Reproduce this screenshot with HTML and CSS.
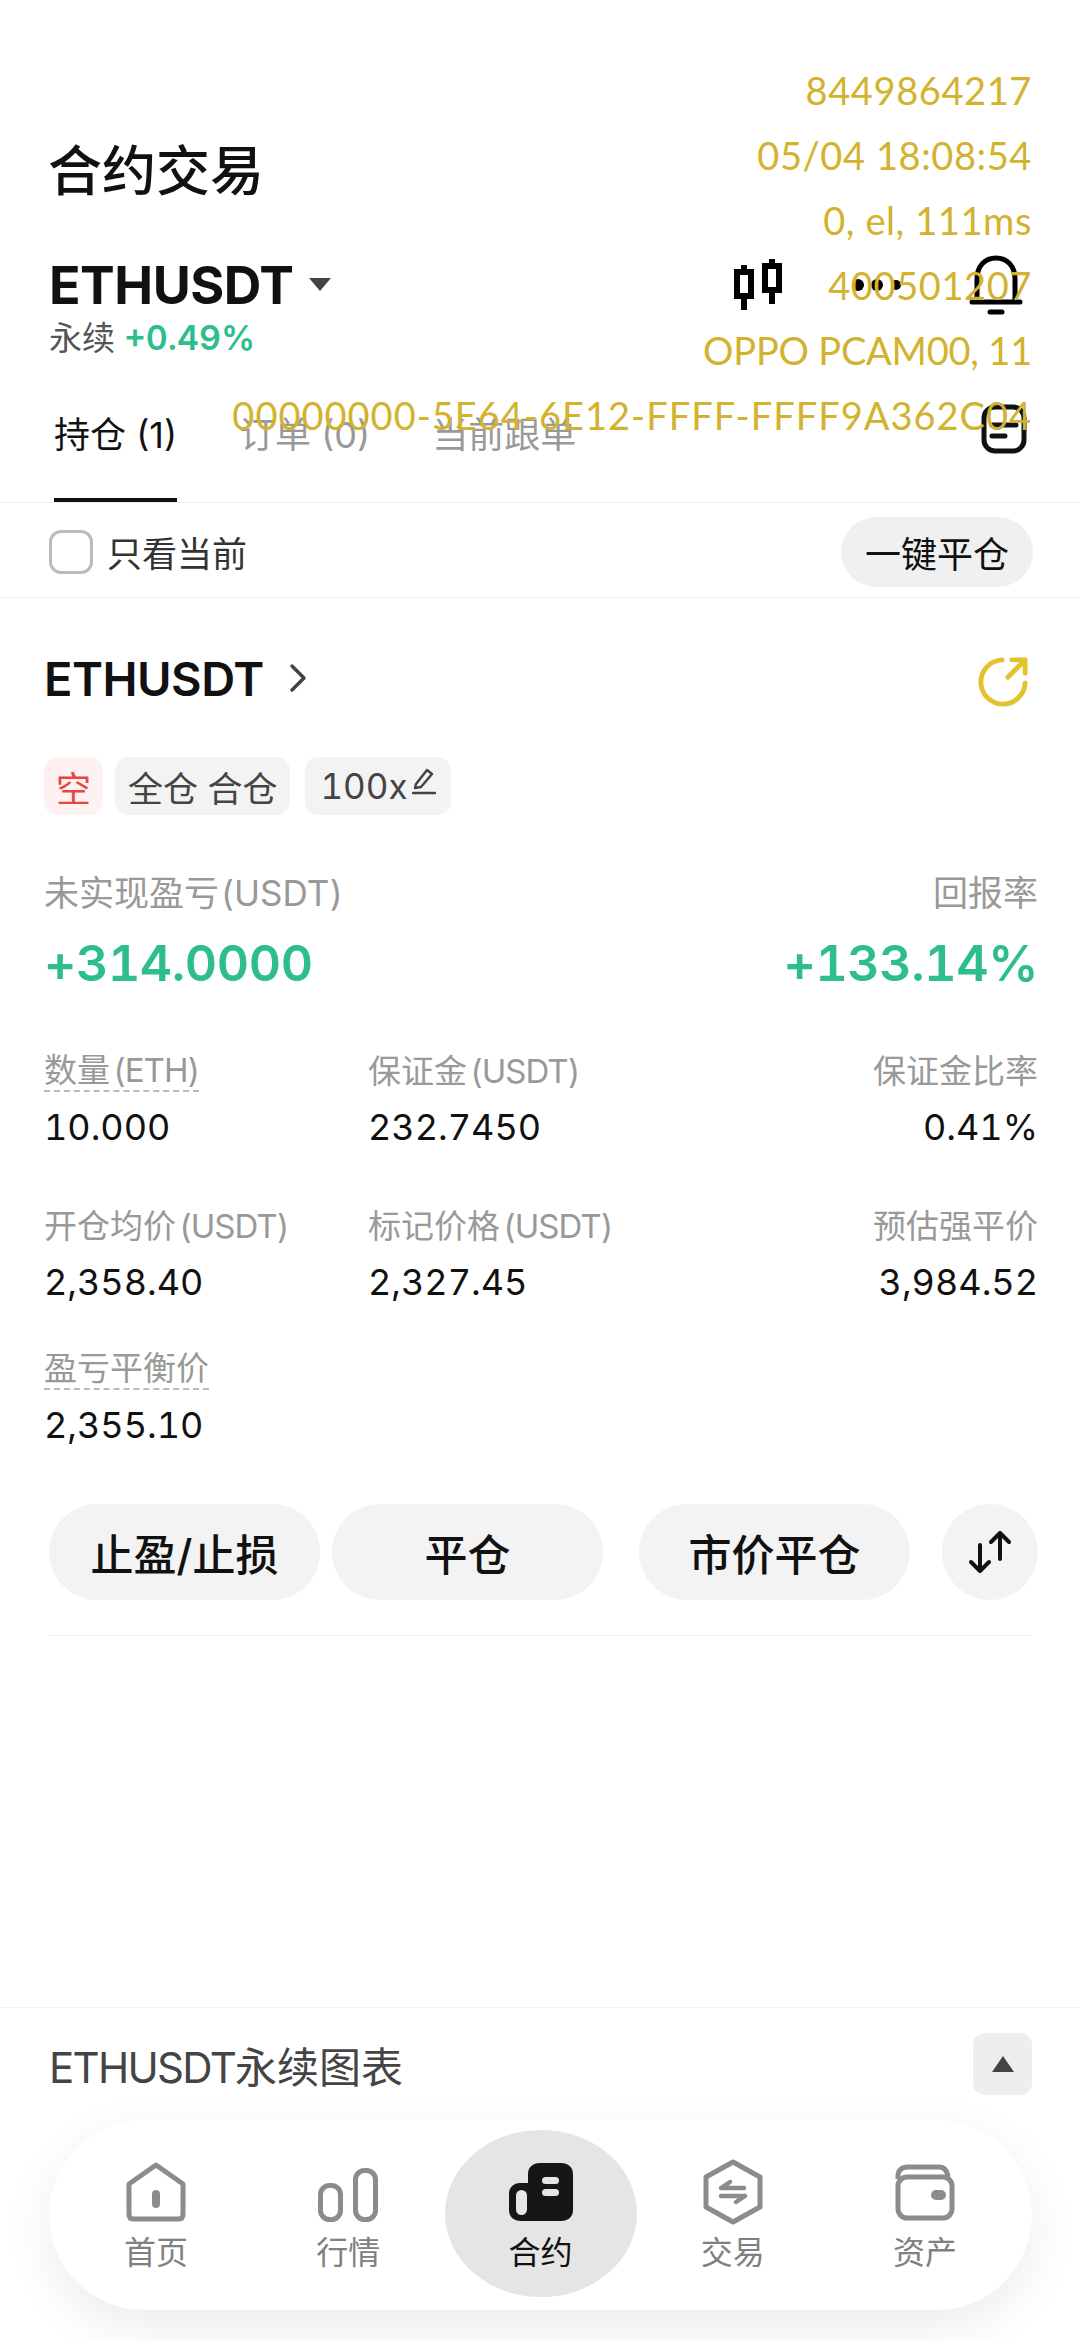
FILE: index.html
```html
<!DOCTYPE html>
<html lang="zh-CN">
<head>
    <meta charset="UTF-8">
    <meta name="viewport" content="width=device-width, initial-scale=1.0">
    <title>合约交易</title>
    <link rel="stylesheet" href="styles.css">
</head>
<body>

<div class="page">
    <h1 class="title">合约交易</h1>

    <div class="symbol-row">
        <span class="symbol">ETHUSDT</span>
        <svg class="caret" viewBox="0 0 22 14"><path d="M0 0H22L11 13Z"/></svg>
        <div class="symbol-tools">
            <svg class="tool-candle" viewBox="0 0 48 52" fill="none" stroke="#000" stroke-width="6">
                <rect x="3" y="13" width="14" height="24"/>
                <path d="M10 6V13M10 37V51"/>
                <rect x="31" y="7" width="14" height="24"/>
                <path d="M38 0V7M38 31V45"/>
            </svg>
            <svg class="tool-dots" viewBox="0 0 50 12" fill="#000">
                <circle cx="6" cy="6" r="6"/>
                <circle cx="25" cy="6" r="6"/>
                <circle cx="44" cy="6" r="5"/>
            </svg>
            <svg class="tool-bell" viewBox="0 0 54 60" fill="none" stroke="#000" stroke-width="5" stroke-linecap="round" stroke-linejoin="round">
                <path d="M8 46V24C8 11 16 3 27 3S46 11 46 24V46"/>
                <path d="M3 47H51"/>
                <path d="M21 57H33"/>
            </svg>
        </div>
    </div>
    <div class="symbol-sub">永续 <span class="up">+0.49%</span></div>

    <div class="tabs">
        <div class="tab active">持仓 (1)</div>
        <div class="tab">订单 (0)</div>
        <div class="tab">当前跟单</div>
        <svg class="tab-icon" viewBox="0 0 46 50" fill="none" stroke="#111" stroke-width="5" stroke-linecap="round">
            <rect x="3" y="3" width="40" height="44" rx="11"/>
            <path d="M11 21H35M11 32H24"/>
        </svg>
    </div>

    <div class="options">
        <label class="only-current"><span class="check"></span>只看当前</label>
        <button class="close-all">一键平仓</button>
    </div>

    <div class="position">
        <div class="pos-head">
            <span class="pos-symbol">ETHUSDT</span>
            <svg class="chevron" viewBox="0 0 18 30" fill="none" stroke="#444" stroke-width="3.500" stroke-linecap="round" stroke-linejoin="round"><path d="M3 3L15 15L3 27"/></svg>
            <svg class="share" viewBox="0 0 54 54" fill="none" stroke="#e3c22b" stroke-width="5" stroke-linecap="round" stroke-linejoin="round">
                <path d="M26 4A23 23 0 1 0 50 28"/>
                <path d="M36 4H50V18M50 4L32 22"/>
            </svg>
        </div>

        <div class="tags">
            <span class="tag tag-short">空</span>
            <span class="tag">全仓 合仓</span>
            <span class="tag tag-lever">100x<svg class="pen" viewBox="0 0 24 28" fill="none" stroke="#444" stroke-width="2.500" stroke-linecap="round" stroke-linejoin="round"><path d="M4 17L15 3L20 7L9 20L3 21ZM1 26H23"/></svg></span>
        </div>

        <div class="pnl">
            <div>
                <div class="pnl-label">未实现盈亏 (USDT)</div>
                <div class="pnl-value">+314.0000</div>
            </div>
            <div class="right">
                <div class="pnl-label">回报率</div>
                <div class="pnl-value">+133.14%</div>
            </div>
        </div>

        <div class="fields">
            <div class="field">
                <div class="field-label dashed">数量 <span class="unit">(ETH)</span></div>
                <div class="field-value">10.000</div>
            </div>
            <div class="field">
                <div class="field-label">保证金 <span class="unit">(USDT)</span></div>
                <div class="field-value">232.7450</div>
            </div>
            <div class="field right">
                <div class="field-label">保证金比率</div>
                <div class="field-value">0.41%</div>
            </div>
            <div class="field">
                <div class="field-label">开仓均价 <span class="unit">(USDT)</span></div>
                <div class="field-value">2,358.40</div>
            </div>
            <div class="field">
                <div class="field-label">标记价格 <span class="unit">(USDT)</span></div>
                <div class="field-value">2,327.45</div>
            </div>
            <div class="field right">
                <div class="field-label">预估强平价</div>
                <div class="field-value">3,984.52</div>
            </div>
            <div class="field">
                <div class="field-label dashed">盈亏平衡价</div>
                <div class="field-value">2,355.10</div>
            </div>
        </div>

        <div class="actions">
            <button class="action">止盈/止损</button>
            <button class="action">平仓</button>
            <button class="action action-market">市价平仓</button>
            <button class="action-swap">
                <svg viewBox="0 0 42 42" fill="none" stroke="#111" stroke-width="4" stroke-linecap="round" stroke-linejoin="round">
                    <path d="M11 14V40M2 31L11 40L20 31"/>
                    <path d="M31 28V2M22 11L31 2L40 11"/>
                </svg>
            </button>
        </div>
    </div>

    <div class="spacer"></div>

    <div class="chart-bar">
        <span class="chart-title"><span class="chart-symbol">ETHUSDT</span>永续图表</span>
        <span class="chart-toggle"><svg viewBox="0 0 22 16"><path d="M11 0L22 16H0Z"/></svg></span>
    </div>

    <nav class="nav">
        <div class="nav-item">
            <svg viewBox="0 0 60 60" fill="none" stroke="#8c8c8c" stroke-width="5" stroke-linejoin="round">
                <path d="M3 22L30 3L57 22V52C57 55 56 57 53 57H7C4 57 3 55 3 52Z"/>
                <rect x="26" y="28" width="8" height="18" rx="4" fill="#8c8c8c" stroke="none"/>
            </svg>
            <span>首页</span>
        </div>
        <div class="nav-item">
            <svg viewBox="0 0 60 60" fill="none" stroke="#8c8c8c" stroke-width="5">
                <rect x="2.500" y="23.500" width="20" height="34" rx="9"/>
                <rect x="37.500" y="8.500" width="20" height="49" rx="9"/>
            </svg>
            <span>行情</span>
        </div>
        <div class="nav-item active">
            <svg class="icon-wide" viewBox="0 0 64 60">
                <path d="M19 21V12C19 5 24 1 31 1H52C59 1 64 5 64 12V48C64 55 59 59 52 59H12C5 59 0 55 0 48V32C0 25 5 21 11 21Z" fill="#161616"/>
                <rect x="7" y="28" width="11" height="25" rx="5.500" fill="#e5e5e5"/>
                <rect x="33" y="15" width="17" height="7" rx="3.500" fill="#e5e5e5"/>
                <rect x="33" y="27" width="17" height="7" rx="3.500" fill="#e5e5e5"/>
            </svg>
            <span>合约</span>
        </div>
        <div class="nav-item">
            <svg class="icon-tall" viewBox="0 0 60 66" fill="none" stroke="#8c8c8c" stroke-width="5" stroke-linejoin="round">
                <path d="M30 3L57 18V48L30 63L3 48V18Z"/>
                <path d="M18 29H41M27 23L18 29M18 37H42M33 43L42 37" stroke-width="4.500" stroke-linecap="round"/>
            </svg>
            <span>交易</span>
        </div>
        <div class="nav-item">
            <svg viewBox="0 0 60 60" fill="none" stroke="#8c8c8c" stroke-width="5" stroke-linejoin="round">
                <path d="M3 17V14C3 8 7 5 13 5H44C49 5 52 8 53 15"/>
                <rect x="3" y="15" width="54" height="41" rx="9"/>
                <rect x="36" y="28" width="15" height="10" rx="5" fill="#8c8c8c" stroke="none"/>
            </svg>
            <span>资产</span>
        </div>
    </nav>

    <!-- info de debug por cima da tela -->
    <div class="debug">
        <div>8449864217</div>
        <div>05/04 18:08:54</div>
        <div>0, el, 111ms</div>
        <div>400501207</div>
        <div class="debug-device">OPPO PCAM00, 11</div>
        <div class="debug-uuid">00000000-5E64-6E12-FFFF-FFFF9A362C04</div>
    </div>
</div>

</body>
</html>
```

FILE: styles.css
```css
* {
    box-sizing: border-box;
}

body {
    margin: 0;
    background-color: #fff;
    color: #111;
    font-family: Inter, "Noto Sans CJK SC", sans-serif;
    font-variant-numeric: tabular-nums;
}

button {
    border: none;
    font-family: inherit;
    color: #111;
    padding: 0;
}

.page {
    position: relative;
    width: 1080px;
    height: 2340px;
    display: flex;
    flex-direction: column;
    overflow: hidden;
}

.up {
    color: #2ebd8e;
    font-size: 34px;
    font-weight: 600;
}

.right {
    text-align: right;
}

/* cabecalho */
.title {
    margin: 138px 0 0 48px;
    font-size: 54px;
    line-height: 68px;
    font-weight: 500;
}

.symbol-row {
    display: flex;
    align-items: center;
    height: 70px;
    margin-top: 44px;
    padding: 0 57px 0 49px;
}

.symbol {
    font-size: 52px;
    font-weight: 700;
    letter-spacing: -0.500px;
}

.caret {
    width: 22px;
    height: 14px;
    margin-left: 16px;
    fill: #444;
}

.symbol-tools {
    margin-left: auto;
    display: flex;
    align-items: center;
}

.tool-candle {
    width: 48px;
    height: 52px;
}

.tool-dots {
    width: 50px;
    height: 12px;
    margin-left: 70px;
}

.tool-bell {
    width: 54px;
    height: 60px;
    margin-left: 67px;
}

.symbol-sub {
    height: 36px;
    padding-left: 49px;
    font-size: 33px;
    line-height: 36px;
    color: #555;
}

/* abas */
.tabs {
    display: flex;
    align-items: flex-end;
    height: 147px;
    padding: 0 53px 0 54px;
    border-bottom: 1px solid #eee;
    font-variant-numeric: normal;
}

.tab {
    height: 94px;
    margin-right: 62px;
    font-size: 36px;
    line-height: 54px;
    color: #999;
    border-bottom: 4px solid transparent;
}

.tab.active {
    color: #111;
    border-bottom-color: #111;
}

.tab-icon {
    width: 46px;
    height: 50px;
    margin: 0 0 48px auto;
}

.options {
    display: flex;
    align-items: center;
    justify-content: space-between;
    height: 95px;
    padding: 3px 47px 0 49px;
    border-bottom: 1px solid #eee;
}

.only-current {
    display: flex;
    align-items: center;
    font-size: 35px;
    color: #333;
}

.check {
    width: 44px;
    height: 44px;
    margin-right: 14px;
    border: 3px solid #bbb;
    border-radius: 12px;
}

.close-all {
    width: 192px;
    height: 70px;
    border-radius: 35px;
    background-color: #f0f0f0;
    font-size: 36px;
}

/* posicao */
.position {
    padding: 0 42px 0 44px;
}

.pos-head {
    display: flex;
    align-items: center;
    height: 70px;
    margin-top: 45px;
}

.pos-symbol {
    font-size: 47px;
    font-weight: 600;
    letter-spacing: -0.500px;
}

.chevron {
    width: 18px;
    height: 30px;
    margin-left: 25px;
}

.share {
    width: 52px;
    height: 52px;
    margin-left: auto;
    margin-right: 9px;
    margin-top: 8px;
}

.tags {
    display: flex;
    align-items: center;
    gap: 12px;
    margin-top: 44px;
}

.tag {
    display: flex;
    align-items: center;
    height: 58px;
    padding: 0 13px;
    border-radius: 14px;
    background-color: #f3f3f4;
    color: #444;
    font-size: 35px;
}

.tag-short {
    padding: 0 12px;
    background-color: #fdf1f1;
    color: #e5473f;
}

.tag-lever {
    margin-left: 3px;
    padding: 0 15px;
}

.pen {
    width: 24px;
    height: 28px;
    margin-left: 4px;
    margin-top: -10px;
}

.pnl {
    display: flex;
    justify-content: space-between;
    margin-top: 53px;
}

.pnl-label {
    font-size: 35px;
    line-height: 50px;
    word-spacing: -8px;
    color: #999;
}

.pnl-value {
    margin-top: 20px;
    font-size: 50px;
    line-height: 50px;
    font-weight: 600;
    color: #2ebd8e;
    letter-spacing: -0.400px;
}

.fields {
    display: grid;
    grid-template-columns: 324px 1fr 1fr;
    grid-template-rows: 155px 143px auto;
    margin-top: 62px;
}

.field-label {
    width: fit-content;
    font-size: 33px;
    line-height: 42px;
    word-spacing: -6px;
    color: #999;
}

.unit {
    letter-spacing: -1px;
}

.field.right .field-label {
    margin-left: auto;
}

.field-label.dashed {
    border-bottom: 2px dashed #bbb;
    line-height: 40px;
}

.field-value {
    margin-top: 14px;
    font-size: 36px;
    line-height: 42px;
    color: #111;
}

.actions {
    display: flex;
    align-items: center;
    height: 132px;
    margin: 58px 6px 0 4px;
    padding-bottom: 36px;
    border-bottom: 1px solid #eee;
}

.action {
    flex: none;
    width: 271px;
    height: 96px;
    margin-left: 1px;
    margin-right: 11px;
    border-radius: 48px;
    background-color: #f3f3f3;
    font-size: 43px;
    font-weight: 500;
}

.action-market {
    margin-left: 25px;
    margin-right: 32px;
}

.action-swap {
    flex: none;
    display: flex;
    align-items: center;
    justify-content: center;
    width: 96px;
    height: 96px;
    border-radius: 48px;
    background-color: #f3f3f3;
}

.action-swap svg {
    width: 42px;
    height: 42px;
}

.spacer {
    flex: 1;
}

/* grafico + navegacao */
.chart-bar {
    display: flex;
    align-items: center;
    justify-content: space-between;
    height: 113px;
    padding: 0 48px 0 49px;
    border-top: 1px solid #f0f0f0;
}

.chart-title {
    font-size: 42px;
    color: #444;
}

.chart-symbol {
    letter-spacing: -1.700px;
}

.chart-toggle {
    display: flex;
    align-items: center;
    justify-content: center;
    width: 59px;
    height: 62px;
    border-radius: 12px;
    background-color: #eee;
}

.chart-toggle svg {
    width: 22px;
    height: 16px;
    fill: #444;
}

.nav {
    display: flex;
    align-items: stretch;
    justify-content: space-between;
    height: 190px;
    margin: 0 48px 30px 49px;
    padding: 10px 11px 13px;
    border-radius: 95px;
    background-color: #fff;
    box-shadow: 0 16px 50px rgba(0, 0, 0, 0.08);
}

.nav-item {
    display: flex;
    flex-direction: column;
    align-items: center;
    width: 192px;
    padding-top: 32px;
    color: #808080;
    font-size: 32px;
    line-height: 44px;
}

.nav-item svg {
    flex: none;
    width: 60px;
    height: 60px;
    margin-bottom: 9px;
}

.nav-item svg.icon-wide {
    width: 64px;
}

.nav-item svg.icon-tall {
    height: 66px;
    margin-top: -3px;
    margin-bottom: 6px;
}

.nav-item.active {
    border-radius: 50%;
    background-color: #e5e5e5;
    color: #111;
}

/* linhas de debug */
.debug {
    position: absolute;
    top: 58px;
    right: 48px;
    font-family: Lato, sans-serif;
    font-size: 38px;
    line-height: 65px;
    letter-spacing: 0.600px;
    color: #d2b22e;
    text-align: right;
    white-space: nowrap;
}

.debug-device {
    letter-spacing: -0.200px;
}

.debug-uuid {
    letter-spacing: 1px;
}
```
